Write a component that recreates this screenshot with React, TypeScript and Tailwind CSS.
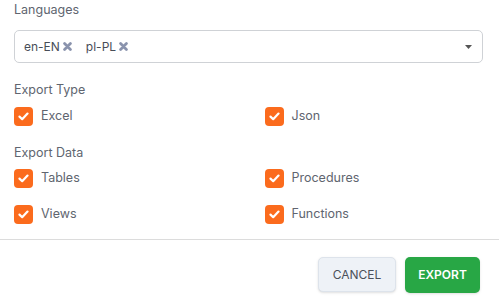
import React from "react";

function Check({ label }: { label: string }) {
  return (
    <div className="flex items-center gap-2 h-5">
      <span className="w-[19px] h-[19px] rounded-[4px] bg-[#fb6b1d] flex items-center justify-center shrink-0">
        <svg width="11" height="9" viewBox="0 0 11 9" fill="none">
          <path d="M1.5 4.6 L4.2 7.2 L9.5 1.6" stroke="white" strokeWidth="2.2" strokeLinecap="round" strokeLinejoin="round" />
        </svg>
      </span>
      <span className="text-[12.5px] text-[#60656f]">{label}</span>
    </div>
  );
}

function Chip({ label }: { label: string }) {
  return (
    <span className="flex items-center gap-[3px] text-[12px] text-[#484d57]">
      {label}
      <svg width="9" height="9" viewBox="0 0 9 9">
        <path d="M1.6 1.6 L7.4 7.4 M7.4 1.6 L1.6 7.4" stroke="#8a93ad" strokeWidth="2.8" strokeLinecap="round" />
      </svg>
    </span>
  );
}

export default function App() {
  return (
    <div className="w-[499px] h-[302px] bg-white overflow-hidden" style={{ fontFamily: "Inter, 'Noto Sans', sans-serif" }}>
      <div className="px-[14px]">
        <div className="text-[12.5px] text-[#60656f] pt-[1px] leading-[18px]">Languages</div>
        <div className="mt-[11px] h-[33px] w-[469px] border border-[#cfd2d6] rounded-[5px] flex items-center pl-[9px] pr-[10px]">
          <div className="flex items-center gap-[14px] flex-1">
            <Chip label="en-EN" />
            <Chip label="pl-PL" />
          </div>
          <svg width="7" height="4" viewBox="0 0 7 4">
            <path d="M0 0 H7 L3.5 4 Z" fill="#555" />
          </svg>
        </div>
        <div className="mt-[18px] text-[12.5px] text-[#60656f] leading-[18px]">Export Type</div>
        <div className="mt-[7px] grid grid-cols-2">
          <Check label="Excel" />
          <div className="pl-[15px]"><Check label="Json" /></div>
        </div>
        <div className="mt-[18px] text-[12.5px] text-[#60656f] leading-[18px]">Export Data</div>
        <div className="mt-[6px] grid grid-cols-2 gap-y-[16px]">
          <Check label="Tables" />
          <div className="pl-[15px]"><Check label="Procedures" /></div>
          <Check label="Views" />
          <div className="pl-[15px]"><Check label="Functions" /></div>
        </div>
      </div>
      <div className="mt-[15px] border-t border-[#dcdcdc]" />
      <div className="flex justify-end gap-[9px] pr-[19px] pt-[17px]">
        <button className="w-[78px] h-[35px] rounded-[5px] bg-[#eef2f7] border border-[#dde3eb] text-[12px] text-[#4b505a] shadow-sm">CANCEL</button>
        <button className="w-[75px] h-[36px] rounded-[5px] bg-[#28a745] text-[12px] text-white font-semibold shadow-sm">EXPORT</button>
      </div>
    </div>
  );
}
